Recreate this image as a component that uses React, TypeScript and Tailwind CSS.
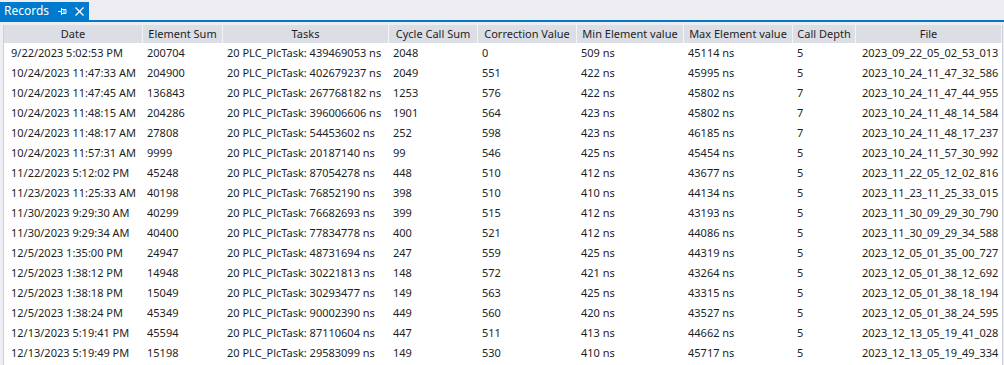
import React from "react";

const columns = [
  { title: "Date", width: "w-[139px]", pad: "pl-[7px]" },
  { title: "Element Sum", width: "w-[80px]", pad: "pl-[4px]" },
  { title: "Tasks", width: "w-[166px]", pad: "pl-[4px]" },
  { title: "Cycle Call Sum", width: "w-[89px]", pad: "pl-[4px]" },
  { title: "Correction Value", width: "w-[99px]", pad: "pl-[4px]" },
  { title: "Min Element value", width: "w-[107px]", pad: "pl-[4px]" },
  { title: "Max Element value", width: "w-[109px]", pad: "pl-[4px]" },
  { title: "Call Depth", width: "w-[63px]", pad: "pl-[4px]" },
  { title: "File", width: "w-[146px]", pad: "pl-[6px]" },
];

const rows: string[][] = [
  ["9/22/2023 5:02:53 PM", "200704", "20 PLC_PlcTask: 439469053 ns", "2048", "0", "509 ns", "45114 ns", "5", "2023_09_22_05_02_53_013"],
  ["10/24/2023 11:47:33 AM", "204900", "20 PLC_PlcTask: 402679237 ns", "2049", "551", "422 ns", "45995 ns", "5", "2023_10_24_11_47_32_586"],
  ["10/24/2023 11:47:45 AM", "136843", "20 PLC_PlcTask: 267768182 ns", "1253", "576", "422 ns", "45802 ns", "7", "2023_10_24_11_47_44_955"],
  ["10/24/2023 11:48:15 AM", "204286", "20 PLC_PlcTask: 396006606 ns", "1901", "564", "423 ns", "45802 ns", "7", "2023_10_24_11_48_14_584"],
  ["10/24/2023 11:48:17 AM", "27808", "20 PLC_PlcTask: 54453602 ns", "252", "598", "423 ns", "46185 ns", "7", "2023_10_24_11_48_17_237"],
  ["10/24/2023 11:57:31 AM", "9999", "20 PLC_PlcTask: 20187140 ns", "99", "546", "425 ns", "45454 ns", "5", "2023_10_24_11_57_30_992"],
  ["11/22/2023 5:12:02 PM", "45248", "20 PLC_PlcTask: 87054278 ns", "448", "510", "412 ns", "43677 ns", "5", "2023_11_22_05_12_02_816"],
  ["11/23/2023 11:25:33 AM", "40198", "20 PLC_PlcTask: 76852190 ns", "398", "510", "410 ns", "44134 ns", "5", "2023_11_23_11_25_33_015"],
  ["11/30/2023 9:29:30 AM", "40299", "20 PLC_PlcTask: 76682693 ns", "399", "515", "412 ns", "43193 ns", "5", "2023_11_30_09_29_30_790"],
  ["11/30/2023 9:29:34 AM", "40400", "20 PLC_PlcTask: 77834778 ns", "400", "521", "412 ns", "44086 ns", "5", "2023_11_30_09_29_34_588"],
  ["12/5/2023 1:35:00 PM", "24947", "20 PLC_PlcTask: 48731694 ns", "247", "559", "425 ns", "44319 ns", "5", "2023_12_05_01_35_00_727"],
  ["12/5/2023 1:38:12 PM", "14948", "20 PLC_PlcTask: 30221813 ns", "148", "572", "421 ns", "43264 ns", "5", "2023_12_05_01_38_12_692"],
  ["12/5/2023 1:38:18 PM", "15049", "20 PLC_PlcTask: 30293477 ns", "149", "563", "425 ns", "43315 ns", "5", "2023_12_05_01_38_18_194"],
  ["12/5/2023 1:38:24 PM", "45349", "20 PLC_PlcTask: 90002390 ns", "449", "560", "420 ns", "43527 ns", "5", "2023_12_05_01_38_24_595"],
  ["12/13/2023 5:19:41 PM", "45594", "20 PLC_PlcTask: 87110604 ns", "447", "511", "413 ns", "44662 ns", "5", "2023_12_13_05_19_41_028"],
  ["12/13/2023 5:19:49 PM", "15198", "20 PLC_PlcTask: 29583099 ns", "149", "530", "410 ns", "45717 ns", "5", "2023_12_13_05_19_49_334"],
];

const PinIcon = () => (
  <svg width="9" height="9" viewBox="0 0 9 9" fill="none" stroke="white" strokeWidth="1">
    <path d="M0 4.5h3.5M3.5 1v7M3.5 2.5h4.5v4h-4.5M6 2.5v4" />
  </svg>
);

const CloseIcon = () => (
  <svg width="9" height="9" viewBox="0 0 9 9" fill="none" stroke="white" strokeWidth="1.3">
    <path d="M0.5 0.5l8 8M8.5 0.5l-8 8" />
  </svg>
);

const App: React.FC = () => {
  return (
    <div
      className="w-[1004px] h-[365px] overflow-hidden bg-[#eeeef2] text-[11px] text-[#1e1e1e] flex flex-col"
      style={{ fontFamily: '"Noto Sans", "Open Sans", sans-serif' }}
    >
      {/* tab strip */}
      <div className="h-[20px] flex items-end pt-[2px]">
        <div className="h-[18px] w-[89px] bg-[#007acc] text-white text-[12px] flex items-center pl-[4px] gap-[9px]">
          <span>Records</span>
          <div className="flex items-center gap-[8px]">
            <PinIcon />
            <CloseIcon />
          </div>
        </div>
      </div>
      <div className="h-[2px] bg-[#007acc]" />

      {/* grid */}
      <div className="flex-1 pt-[3px] pl-[3px] pr-[1px]">
        <div className="h-full border-l border-r border-[#cccedb] bg-white">
          <div className="flex h-[18px] bg-[#dcdee5]">
            {columns.map((c) => (
              <div
                key={c.title}
                className={`${c.width} shrink-0 flex items-center justify-center border-r border-[#f4f4f6] whitespace-nowrap`}
              >
                {c.title}
              </div>
            ))}
          </div>
          {rows.map((r, i) => (
            <div key={i} className="flex h-[20px]">
              {r.map((cell, j) => (
                <div
                  key={j}
                  className={`${columns[j].width} ${columns[j].pad} shrink-0 flex items-center whitespace-nowrap overflow-hidden`}
                >
                  {cell}
                </div>
              ))}
            </div>
          ))}
        </div>
      </div>
    </div>
  );
};

export default App;
